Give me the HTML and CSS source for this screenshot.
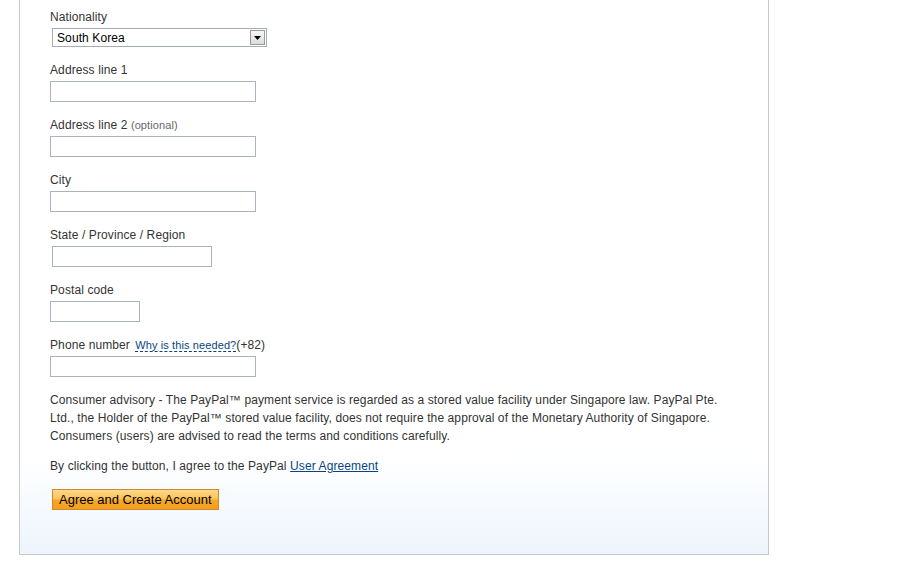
FILE: index.html
```html
<!DOCTYPE html>
<html>
<head>
<meta charset="utf-8">
<link rel="stylesheet" href="styles.css">
</head>
<body>
<div class="panel">
  <div class="field first">
    <label class="lbl">Nationality</label>
    <div class="select"><span class="sel-text">South Korea</span><span class="sel-arrow"><svg width="7" height="4" viewBox="0 0 7 4"><path d="M0 0H7L3.5 4Z" fill="#000"/></svg></span></div>
  </div>
  <div class="field">
    <label class="lbl">Address line 1</label>
    <div class="input w206"></div>
  </div>
  <div class="field">
    <label class="lbl">Address line 2 <span class="opt">(optional)</span></label>
    <div class="input w206"></div>
  </div>
  <div class="field">
    <label class="lbl">City</label>
    <div class="input w206"></div>
  </div>
  <div class="field">
    <label class="lbl">State / Province / Region</label>
    <div class="input w160 shift"></div>
  </div>
  <div class="field">
    <label class="lbl">Postal code</label>
    <div class="input w90"></div>
  </div>
  <div class="field last">
    <label class="lbl">Phone number <a class="help">Why is this needed?</a>(+82)</label>
    <div class="input w206"></div>
  </div>
  <p class="advisory">Consumer advisory - The PayPal™ payment service is regarded as a stored value facility under Singapore law. PayPal Pte.<br>Ltd., the Holder of the PayPal™ stored value facility, does not require the approval of the Monetary Authority of Singapore.<br>Consumers (users) are advised to read the terms and conditions carefully.</p>
  <p class="agree">By clicking the button, I agree to the PayPal <a class="link">User Agreement</a></p>
  <button class="btn">Agree and Create Account</button>
</div>
</body>
</html>
```
FILE: styles.css
```css
html, body {
  margin: 0;
  padding: 0;
  background: #fff;
}
body {
  font-family: "Liberation Sans", Arial, sans-serif;
  font-size: 12px;
  color: #333;
  letter-spacing: 0.1px;
}
.panel {
  margin-left: 19px;
  width: 718px;
  height: 544px;
  padding: 10px 0 0 30px;
  border: 1px solid #c9c9c9;
  border-top: none;
  background: linear-gradient(to bottom, #fff 0, #fff 455px, #eef5fc 554px);
}
.field {
  margin-bottom: 16px;
}
.field.last {
  margin-bottom: 0;
}
.lbl {
  display: block;
  line-height: 15px;
  height: 15px;
  margin-bottom: 3px;
  white-space: nowrap;
}
.opt {
  font-size: 11px;
  color: #666;
}
.help {
  font-size: 11px;
  color: #084482;
  border-bottom: 1px dashed #084482;
  margin-left: 2px;
}
.input {
  box-sizing: border-box;
  height: 21px;
  border: 1px solid #a8b5c1;
  background: #fff;
}
.w206 { width: 206px; }
.w160 { width: 160px; }
.w90 { width: 90px; }
.shift { margin-left: 2px; }
.select {
  box-sizing: border-box;
  margin-left: 2px;
  width: 215px;
  height: 19px;
  border: 1px solid #a5acb2;
  display: flex;
  align-items: center;
  padding: 1px 1px 1px 4px;
  background: #fff;
}
.sel-text {
  flex: 1;
  font-size: 12px;
  color: #000;
  line-height: 15px;
  padding-top: 1px;
}
.sel-arrow {
  box-sizing: border-box;
  width: 15px;
  height: 15px;
  border: 1px solid #9a9a9a;
  background: linear-gradient(#f7f7f7, #dcdcdc);
  display: flex;
  align-items: center;
  justify-content: center;
}
.advisory {
  margin: 14px 0 12px;
  line-height: 18px;
  white-space: nowrap;
}
.agree {
  margin: 0 0 14px;
  line-height: 18px;
}
.link {
  color: #084482;
  text-decoration: underline;
}
.btn {
  display: block;
  margin-left: 2px;
  box-sizing: border-box;
  height: 21px;
  padding: 0 6px;
  font-family: "Liberation Sans", Arial, sans-serif;
  font-size: 13px;
  color: #000;
  border: 1px solid #c98a33;
  background: linear-gradient(to bottom, #ffd98a 0, #fcc35a 45%, #f6a727 55%, #f49f1c 100%);
  cursor: pointer;
}
```
